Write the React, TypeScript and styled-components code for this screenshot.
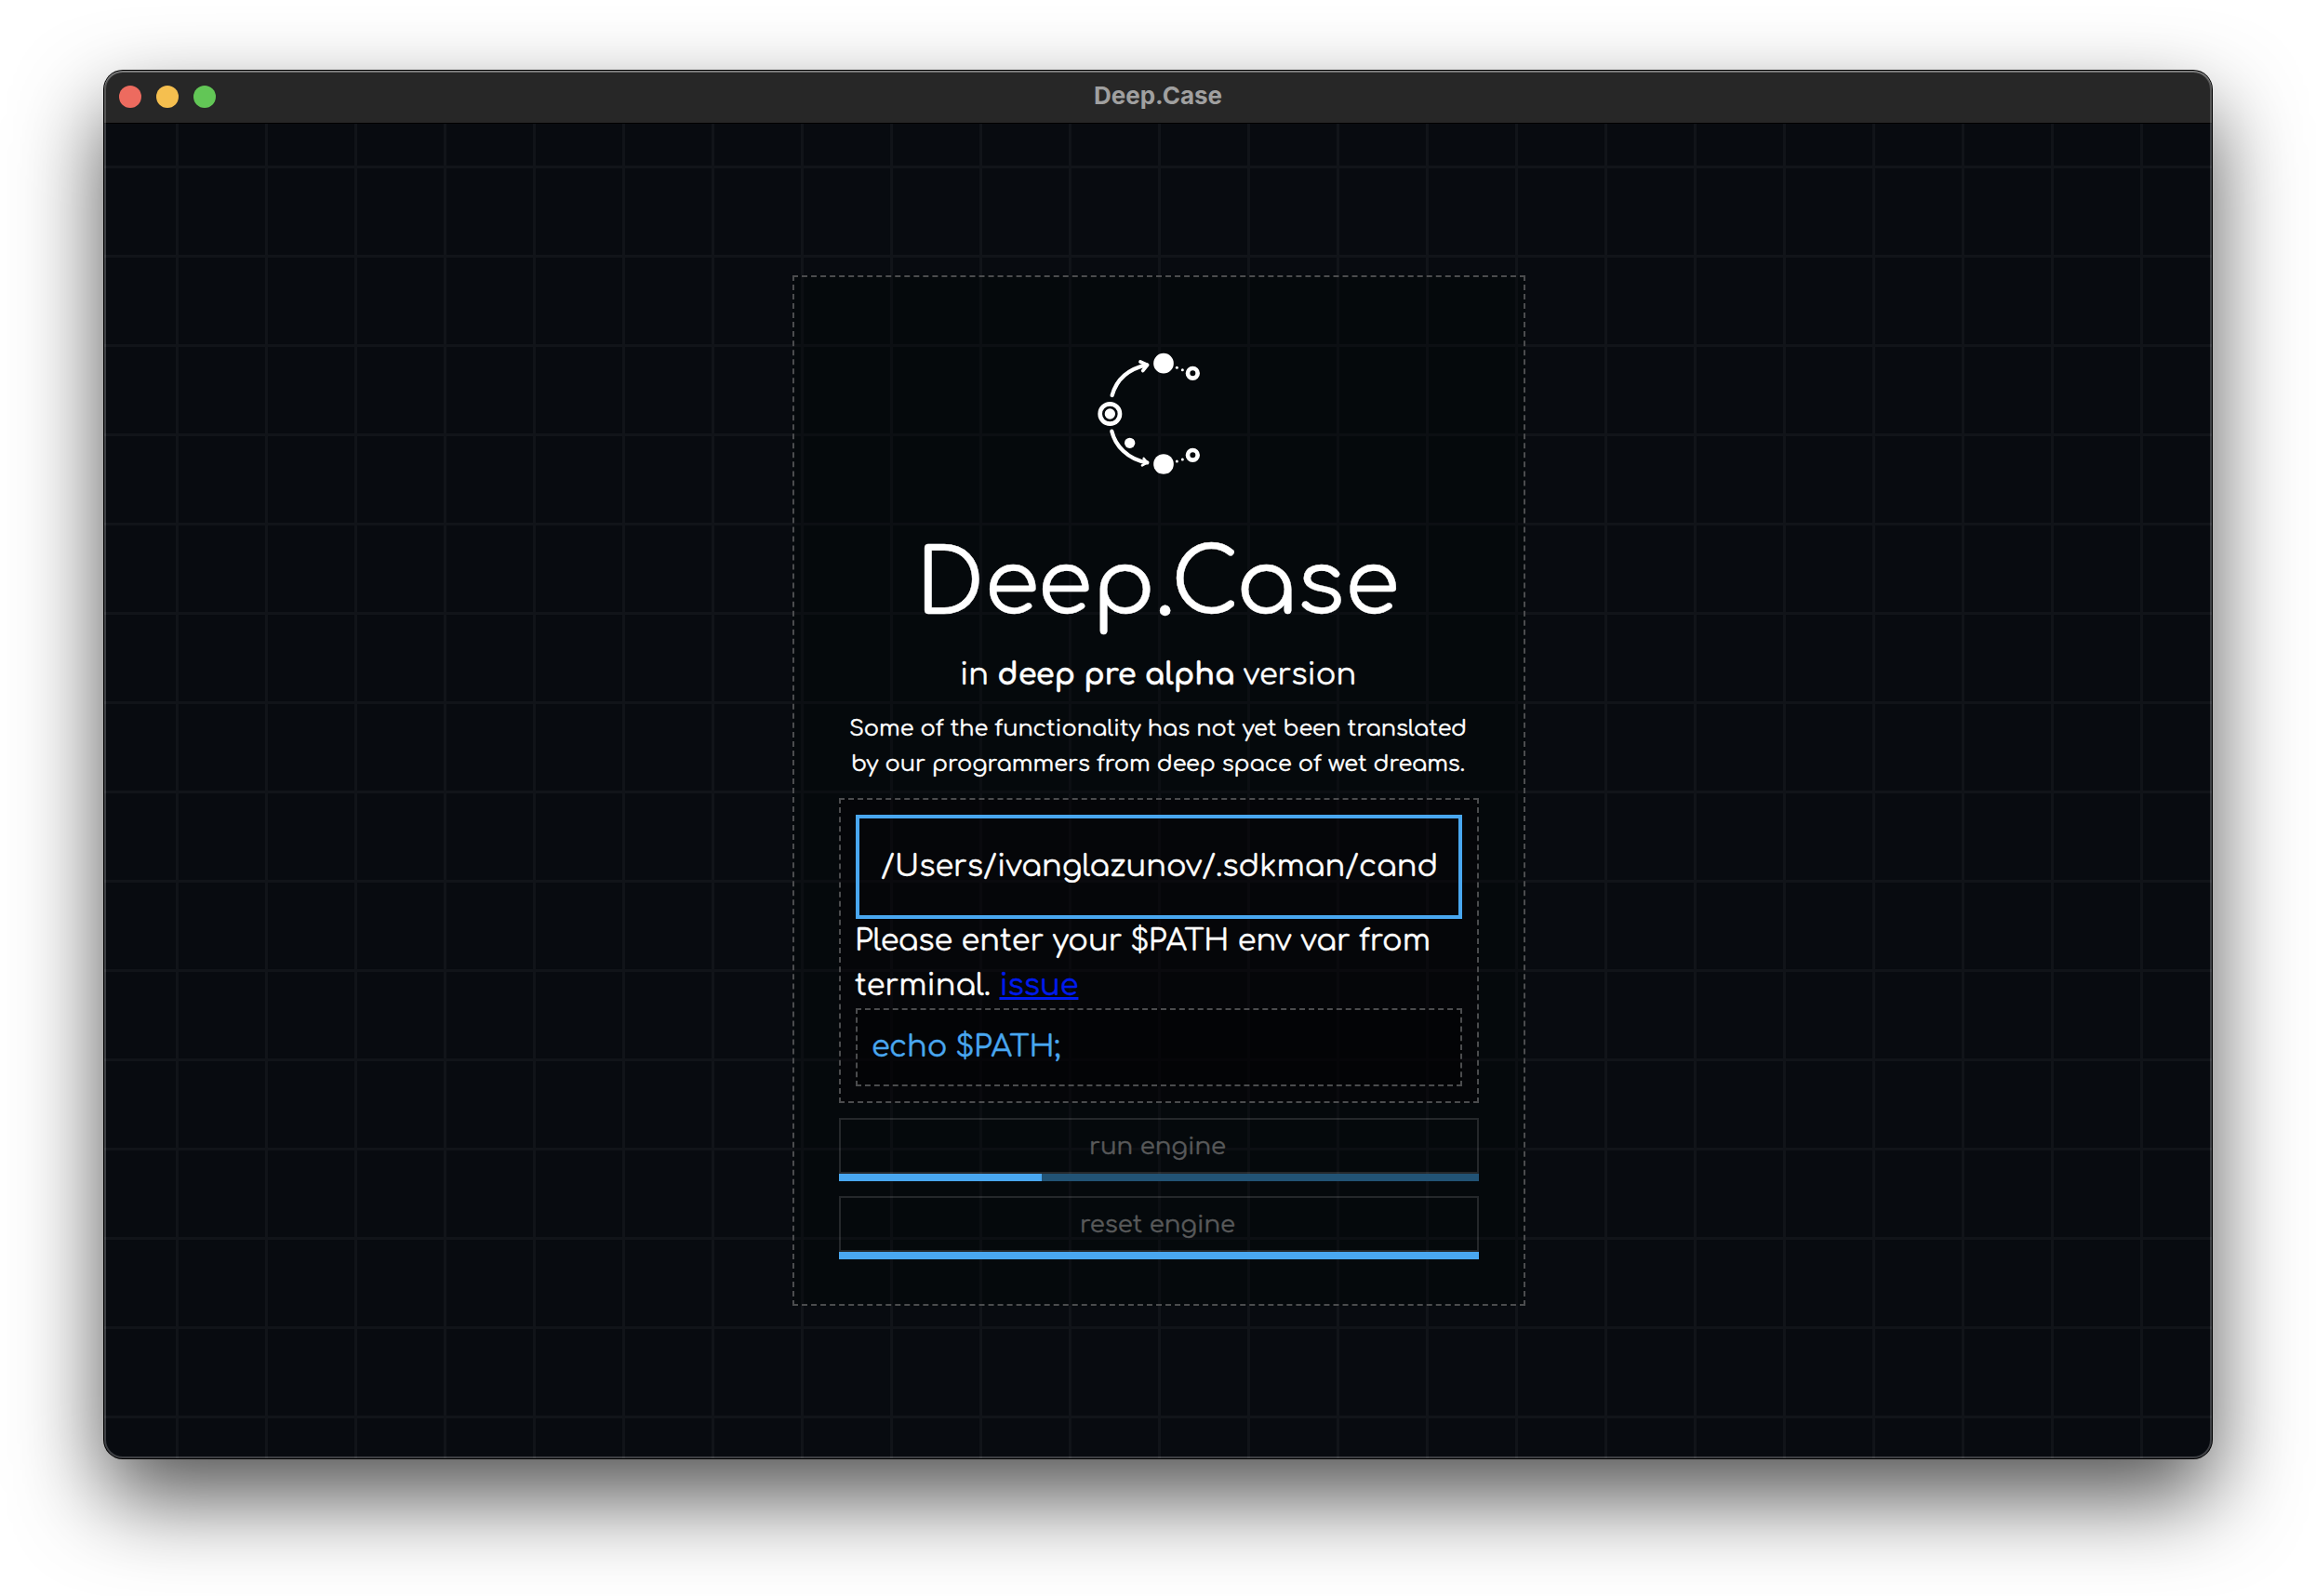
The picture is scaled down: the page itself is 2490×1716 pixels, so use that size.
import React from 'react';
import styled, { createGlobalStyle } from 'styled-components';

const BLUE = '#49a7f0';
const DASHED = '2px dashed #4b4c4e';

const GlobalStyle = createGlobalStyle`
  *, *::before, *::after { box-sizing: border-box; }
  body {
    margin: 0;
    background: #fff;
    overflow: hidden;
    font-family: Comfortaa, Quicksand, sans-serif;
    font-size: 32px;
    line-height: 1.5;
    color: #fff;
  }
`;

const Desktop = styled.div`
  width: 2490px;
  height: 1716px;
  padding: 76px 112px 148px;
  display: flex;
`;

const Window = styled.div`
  position: relative;
  flex: 1;
  display: flex;
  flex-direction: column;
  border-radius: 20px;
  background: #080b10;
  box-shadow: 0 0 0 1px #000, 0 42px 94px rgba(0, 0, 0, 0.68);

  &::after {
    content: '';
    position: absolute;
    inset: 0;
    border-radius: inherit;
    pointer-events: none;
    box-shadow: inset 0 1px 0 rgba(255, 255, 255, 0.16), inset 0 2px 0 rgba(255, 255, 255, 0.14),
      inset 0 0 0 2px rgba(255, 255, 255, 0.22);
  }
`;

const TitleBar = styled.header`
  height: 56px;
  padding: 0 16px;
  display: grid;
  grid-template-columns: 1fr auto 1fr;
  align-items: center;
  border-radius: 20px 20px 0 0;
  background: #272727;
`;

const Lights = styled.div`
  display: flex;
  gap: 16px;
`;

const Light = styled.span<{ $color: string }>`
  width: 24px;
  height: 24px;
  border-radius: 50%;
  background: ${(p) => p.$color};
`;

const WindowTitle = styled.span`
  padding-bottom: 2px;
  font: 700 26px/32px Inter, sans-serif;
  color: #a0a0a0;
`;

const Content = styled.main`
  flex: 1;
  display: flex;
  align-items: center;
  justify-content: center;
  padding: 0 0 1px 2px;
  border-top: 1px solid #000;
  border-radius: 0 0 20px 20px;
  background-image: linear-gradient(90deg, #111419 3px, transparent 3px),
    linear-gradient(#111419 3px, transparent 3px);
  background-size: 96px 96px;
  background-position: 77px 0, 0 45px;
`;

const Panel = styled.section`
  width: 788px;
  height: 1108px;
  padding: 48px;
  display: flex;
  flex-direction: column;
  border: ${DASHED};
  background: rgba(0, 4, 4, 0.27);
  -webkit-text-stroke: 0.4px;
`;

const Logo = styled.svg`
  align-self: center;
  flex: none;
  width: 160px;
  height: 160px;
  margin: 14px 0 37.2px;
`;

const Title = styled.h1`
  margin: 0 3px 0 0;
  font-size: 96px;
  font-weight: 400;
  text-align: center;
`;

const Subtitle = styled.div`
  padding: 1px 2px 0 0;
  text-align: center;

  b {
    letter-spacing: -0.1px;
  }
`;

const Note = styled.p`
  margin: 15px 2px 17px 0;
  font-size: 24px;
  line-height: 38px;
  text-align: center;
  white-space: nowrap;
`;

const Setup = styled.div`
  padding: 16px;
  border: ${DASHED};
  background: rgba(6, 0, 4, 0.3);
`;

const PathInput = styled.input`
  display: block;
  width: 100%;
  height: 112px;
  padding: 0 24px 2px 23px;
  border: 4px solid ${BLUE};
  border-radius: 0;
  outline: none;
  background: transparent;
  color: #fff;
  font: inherit;
  -webkit-text-stroke: 0.4px;
`;

const Hint = styled.div`
  margin-left: -1px;
`;

const Link = styled.a`
  color: #001bee;
`;

const Code = styled.div`
  padding: 16px 15px;
  border: ${DASHED};
  background: rgba(0, 0, 0, 0.3);
  color: ${BLUE};
`;

const Action = styled.div`
  margin-top: 16px;
`;

const ActionButton = styled.button`
  display: block;
  width: 100%;
  height: 60px;
  padding: 0 3px 0 0;
  border: 2px solid rgba(255, 255, 255, 0.13);
  background: transparent;
  color: #58595a;
  font: 400 26px/1.2 Comfortaa, Quicksand, sans-serif;
  -webkit-text-stroke: 0.4px;
`;

const Track = styled.div`
  height: 8px;
  background: #225375;
`;

const Progress = styled.div`
  height: 100%;
  background: ${BLUE};
`;

const DeepLogo = () => (
  <Logo viewBox="18 0 480 480" fill="none" stroke="#fff" strokeLinecap="round" strokeLinejoin="round">
    <path d="M107 195C121 145 158 110 219 97" strokeWidth="13" />
    <path d="M198 87L221 97L206 116" strokeWidth="11" />
    <path d="M106 311C117 357 157 402 220 412" strokeWidth="13" />
    <path d="M209 399L220 412L204 421" strokeWidth="8" />
    <circle cx="100" cy="255" r="32" strokeWidth="14" />
    <circle cx="367" cy="124" r="16" strokeWidth="14" />
    <circle cx="367" cy="388" r="16" strokeWidth="14" />
    <g fill="#fff" stroke="none">
      <circle cx="100" cy="255" r="17" />
      <circle cx="273" cy="92" r="32.5" />
      <circle cx="273" cy="417" r="32.5" />
      <circle cx="164" cy="349" r="17" />
      <circle cx="316" cy="106" r="4.5" />
      <circle cx="334" cy="113" r="4.5" />
      <circle cx="316" cy="408" r="4.5" />
      <circle cx="334" cy="402" r="4.5" />
    </g>
  </Logo>
);

const actions = [
  { label: 'run engine', progress: 31.7 },
  { label: 'reset engine', progress: 100 },
];

export default function App() {
  return (
    <>
      <GlobalStyle />
      <Desktop>
        <Window>
          <TitleBar>
            <Lights>
              <Light $color="#ed6b5f" />
              <Light $color="#f5bf4f" />
              <Light $color="#62c656" />
            </Lights>
            <WindowTitle>Deep.Case</WindowTitle>
          </TitleBar>
          <Content>
            <Panel>
              <DeepLogo />
              <Title>Deep.Case</Title>
              <Subtitle>
                in <b>deep pre alpha</b> version
              </Subtitle>
              <Note>
                Some of the functionality has not yet been translated
                <br />
                by our programmers from deep space of wet dreams.
              </Note>
              <Setup>
                <PathInput defaultValue="/Users/ivanglazunov/.sdkman/cand" />
                <Hint>
                  Please enter your $PATH env var from terminal. <Link href="#">issue</Link>
                </Hint>
                <Code>echo $PATH;</Code>
              </Setup>
              {actions.map(({ label, progress }) => (
                <Action key={label}>
                  <ActionButton>{label}</ActionButton>
                  <Track>
                    <Progress style={{ width: `${progress}%` }} />
                  </Track>
                </Action>
              ))}
            </Panel>
          </Content>
        </Window>
      </Desktop>
    </>
  );
}
